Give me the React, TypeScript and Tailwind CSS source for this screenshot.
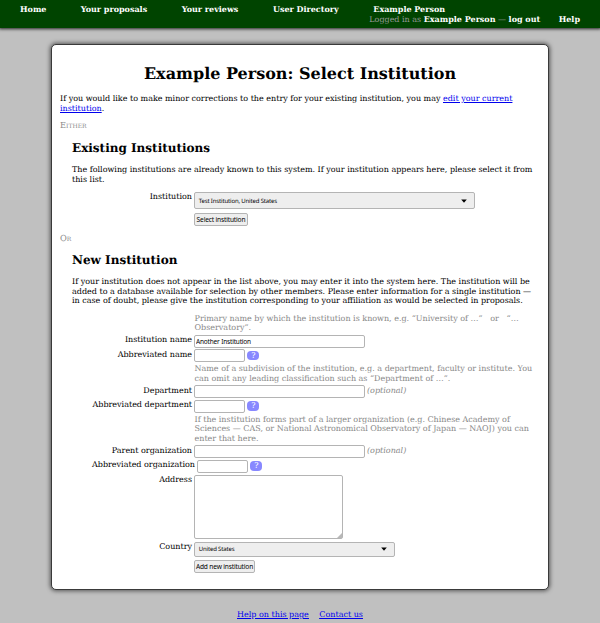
import React from "react";

const control = "box-border rounded-[2px] border border-[#b4b4b4]";

function Row({ label, height, children, wide = false }: { label?: string; height: string; children: React.ReactNode; wide?: boolean }) {
  return (
    <div className={`flex ${height}`}>
      <div className={`${wide ? "w-[123px]" : "w-[120px]"} shrink-0 whitespace-nowrap pt-[0.3px] text-right`}>{label}</div>
      <div className="ml-[2px] flex items-start">{children}</div>
    </div>
  );
}

function Hint({ lines, height }: { lines: string[]; height: string }) {
  return (
    <div className={`ml-[122.5px] whitespace-pre text-[#888888] ${height}`}>
      {lines.map((l) => (
        <div key={l}>{l}</div>
      ))}
    </div>
  );
}

function Help() {
  return (
    <span className="ml-[2.3px] mt-[1.5px] flex h-[9.5px] w-[12px] items-center justify-center rounded-[4px] bg-[#8888ff] text-white">?</span>
  );
}

function Select({ text, size }: { text: string; size: string }) {
  return (
    <div className={`${control} ${size} flex items-center justify-between bg-[#eeeeee] pl-[3.7px] pr-[7px] font-['Noto_Sans',sans-serif] text-[6px] leading-[8px] tracking-[-0.15px]`}>
      <span className="whitespace-nowrap">{text}</span>
      <svg width="6" height="4" viewBox="0 0 6 4">
        <path d="M0.2 0.5h5.6L3 3.7z" fill="#000" />
      </svg>
    </div>
  );
}

function Button({ text, size }: { text: string; size: string }) {
  return (
    <button className={`${control} ${size} flex items-center justify-center whitespace-nowrap bg-[#eeeeee] font-['Noto_Sans',sans-serif] text-[6.6px] leading-[8px] tracking-[-0.16px]`}>
      {text}
    </button>
  );
}

function Input({ size, value }: { size: string; value?: string }) {
  return (
    <input
      defaultValue={value}
      className={`${control} ${size} h-[13px] bg-white px-[1px] font-['Noto_Sans',sans-serif] text-[6.5px] leading-[9px] tracking-[-0.17px]`}
    />
  );
}

const Optional = () => <i className="ml-[2px] mt-[1px] text-[#888888]">(optional)</i>;

export default function App() {
  return (
    <div className="h-[623px] w-[600px] overflow-hidden bg-[#c0c0c0] font-['DejaVu_Serif',serif] text-[8px] leading-[9.5px] text-black [text-rendering:geometricPrecision]">
      <header className="h-[28px] bg-[#004400] pt-[4.5px] font-bold text-white shadow-[0_0_3px_1px_#222]">
        <nav className="flex h-[10px] whitespace-nowrap pl-[20px]">
          <a className="w-[60.7px]">Home</a>
          <a className="w-[101px]">Your proposals</a>
          <a className="w-[91.3px]">Your reviews</a>
          <a className="w-[100.3px]">User Directory</a>
          <a>Example Person</a>
        </nav>
        <div className="flex justify-end whitespace-nowrap pr-[20px]">
          <span className="font-normal text-[#999999]">
            Logged in as <b className="text-white">Example Person</b> — <b className="text-white">log out</b>
          </span>
          <a className="ml-[18.5px]">Help</a>
        </div>
      </header>

      <main className="ml-[51px] mt-[16px] h-[546px] w-[498px] rounded-[5px] border border-[#3a3a3a] bg-white px-[8px] pt-[19px] shadow-[0_0_4px_1px_#555]">
        <h1 className="h-[30px] whitespace-nowrap text-center text-[16px] font-bold leading-[19px]">Example Person: Select Institution</h1>
        <p className="h-[27px] whitespace-nowrap">
          If you would like to make minor corrections to the entry for your existing institution, you may{" "}
          <a className="text-[#0000ee] underline">edit your current<br />institution</a>.
        </p>
        <div className="h-[19.5px] text-[8.3px] text-[#888888] [font-variant:small-caps]">Either</div>

        <section className="ml-[12px] h-[93px]">
          <h2 className="h-[24.5px] text-[12px] font-bold leading-[14px]">Existing Institutions</h2>
          <p className="h-[27px] whitespace-nowrap">
            The following institutions are already known to this system. If your institution appears here, please select it from<br />this list.
          </p>
          <Row label="Institution" height="h-[21px]">
            <Select text="Test Institution, United States" size="h-[17px] w-[281px]" />
          </Row>
          <Row height="h-[13px]">
            <Button text="Select institution" size="h-[13px] w-[54px]" />
          </Row>
        </section>

        <div className="h-[19.2px] text-[8.3px] text-[#888888] [font-variant:small-caps]">Or</div>

        <section className="ml-[12px]">
          <h2 className="h-[24.5px] text-[12px] font-bold leading-[14px]">New Institution</h2>
          <p className="h-[36.8px] whitespace-nowrap">
            If your institution does not appear in the list above, you may enter it into the system here. The institution will be<br />
            added to a database available for selection by other members. Please enter information for a single institution —<br />
            in case of doubt, please give the institution corresponding to your affiliation as would be selected in proposals.
          </p>
          <Hint height="h-[21px]" lines={["Primary name by which the institution is known, e.g. “University of …” \u00a0 or \u00a0 “…", "Observatory”."]} />
          <Row label="Institution name" height="h-[14.5px]">
            <Input size="w-[171px]" value="Another Institution" />
          </Row>
          <Row label="Abbreviated name" height="h-[15px]">
            <Input size="w-[51px]" />
            <Help />
          </Row>
          <Hint height="h-[21px]" lines={["Name of a subdivision of the institution, e.g. a department, faculty or institute. You", "can omit any leading classification such as “Department of …”."]} />
          <Row label="Department" height="h-[14.5px]">
            <Input size="w-[171px]" />
            <Optional />
          </Row>
          <Row label="Abbreviated department" height="h-[15px]">
            <Input size="w-[51px]" />
            <Help />
          </Row>
          <Hint height="h-[30.5px]" lines={["If the institution forms part of a larger organization (e.g. Chinese Academy of", "Sciences — CAS, or National Astronomical Observatory of Japan — NAOJ) you can", "enter that here."]} />
          <Row label="Parent organization" height="h-[14.5px]">
            <Input size="w-[171px]" />
            <Optional />
          </Row>
          <Row label="Abbreviated organization" height="h-[15px]" wide>
            <Input size="w-[51px]" />
            <Help />
          </Row>
          <Row label="Address" height="h-[67px]">
            <div className={`${control} flex h-[64px] w-[149px] items-end justify-end bg-white`}>
              <svg width="5" height="5" viewBox="0 0 5 5">
                <path d="M5 0v5H0z" fill="#b8b8b8" />
              </svg>
            </div>
          </Row>
          <Row label="Country" height="h-[18.5px]">
            <Select text="United States" size="h-[15px] w-[201px]" />
          </Row>
          <Row height="h-[13px]">
            <Button text="Add new institution" size="h-[13px] w-[61px]" />
          </Row>
        </section>
      </main>

      <footer className="mt-[20px] flex justify-center gap-[10.5px] text-[#0000ee] underline">
        <a>Help on this page</a>
        <a>Contact us</a>
      </footer>
    </div>
  );
}
